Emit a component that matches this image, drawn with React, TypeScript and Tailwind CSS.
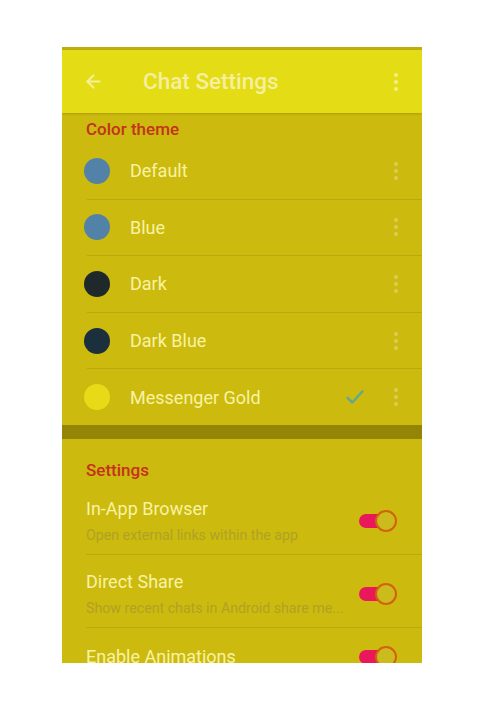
import { ArrowLeft } from 'lucide-react'

const themes = [
  { name: 'Default', color: 'bg-[#5282a8]', checked: false },
  { name: 'Blue', color: 'bg-[#5282a8]', checked: false },
  { name: 'Dark', color: 'bg-[#1f292c]', checked: false },
  { name: 'Dark Blue', color: 'bg-[#1c2f3d]', checked: false },
  { name: 'Messenger Gold', color: 'bg-[#e7db18]', checked: true },
]

const settings: { title: string; sub?: string }[] = [
  { title: 'In-App Browser', sub: 'Open external links within the app' },
  { title: 'Direct Share', sub: 'Show recent chats in Android share me...' },
  { title: 'Enable Animations' },
]

// three stacked dots, the Android overflow glyph
function Dots({ className }: { className: string }) {
  return (
    <div className="flex flex-col items-center gap-[3px]">
      <span className={`w-[4px] h-[4px] rounded-full ${className}`} />
      <span className={`w-[4px] h-[4px] rounded-full ${className}`} />
      <span className={`w-[4px] h-[4px] rounded-full ${className}`} />
    </div>
  )
}

function Toggle() {
  return (
    <div className="relative w-[38px] h-[22px] flex items-center flex-shrink-0">
      <div className="w-[30px] h-[14px] rounded-full bg-[#e8185a]" />
      <div className="absolute right-0 top-0 w-[22px] h-[22px] rounded-full border-[2.5px] border-[#d4610c] bg-[#cbbb1c]" />
    </div>
  )
}

export default function App() {
  return (
    <div
      className="w-[480px] h-[710px] bg-white pt-[47px] pl-[62px]"
      style={{ fontFamily: 'Roboto, "Noto Sans", sans-serif' }}
    >
      <div className="w-[360px] h-[616px] overflow-hidden bg-[#ccba0f] flex flex-col">
        {/* toolbar */}
        <div className="h-[3px] bg-[#bfae0c] flex-shrink-0" />
        <div className="h-[63px] bg-[#e4dc14] flex items-center flex-shrink-0 shadow-[0_1px_2px_rgba(120,100,0,0.35)]">
          <ArrowLeft className="ml-[21px] w-[21px] h-[21px] text-[#f6f09a]" strokeWidth={2.4} />
          <span className="ml-[39px] text-[22.5px] font-medium text-[#f5efa0] leading-none">Chat Settings</span>
          <div className="ml-auto mr-[24px]">
            <Dots className="bg-[#f4ee8a]" />
          </div>
        </div>

        {/* color theme */}
        <div className="pl-[24px] pt-[6px] pb-[4px] text-[17px] leading-[20px] font-medium text-[#c4321b]">
          Color theme
        </div>
        {themes.map((t, i) => (
          <div key={t.name} className="flex-shrink-0">
            <div className="h-[55.6px] flex items-center pl-[22px]">
              <span className={`w-[26px] h-[26px] rounded-full ${t.color}`} />
              <span className="ml-[20px] text-[18px] text-[#f8f3a2]">{t.name}</span>
              <div className="ml-auto flex items-center">
                {t.checked && (
                  <svg viewBox="0 0 24 24" className="w-[22px] h-[22px] mr-[28px]" fill="none" stroke="#62a98e" strokeWidth={2.8} strokeLinecap="round" strokeLinejoin="round">
                    <path d="M4 13l5 5L20 6" />
                  </svg>
                )}
                <div className="mr-[24px]">
                  <Dots className="bg-[#dccd55]" />
                </div>
              </div>
            </div>
            {i < themes.length - 1 && <div className="ml-[25px] h-px bg-[#bcaa0c]" />}
          </div>
        ))}
        <div className="h-[14px] bg-[#958506] flex-shrink-0" />

        {/* settings */}
        <div className="pl-[24px] pt-[21px] pb-[2px] text-[17px] leading-[20px] font-medium text-[#c4321b]">
          Settings
        </div>
        {settings.map((s) => (
          <div key={s.title} className="ml-[24px] border-b border-[#bcaa0c] flex items-center pt-[16px] pb-[10px] pr-[25px] flex-shrink-0 last:pt-[18px] last:border-b-0">
            <div className="flex-1 min-w-0">
              <div className="text-[18px] leading-[22px] text-[#f8f3a2]">{s.title}</div>
              {s.sub && (
                <div className="mt-[6px] text-[14.2px] leading-[18px] text-[#b1a124] whitespace-nowrap overflow-hidden">{s.sub}</div>
              )}
            </div>
            <Toggle />
          </div>
        ))}
      </div>
    </div>
  )
}
